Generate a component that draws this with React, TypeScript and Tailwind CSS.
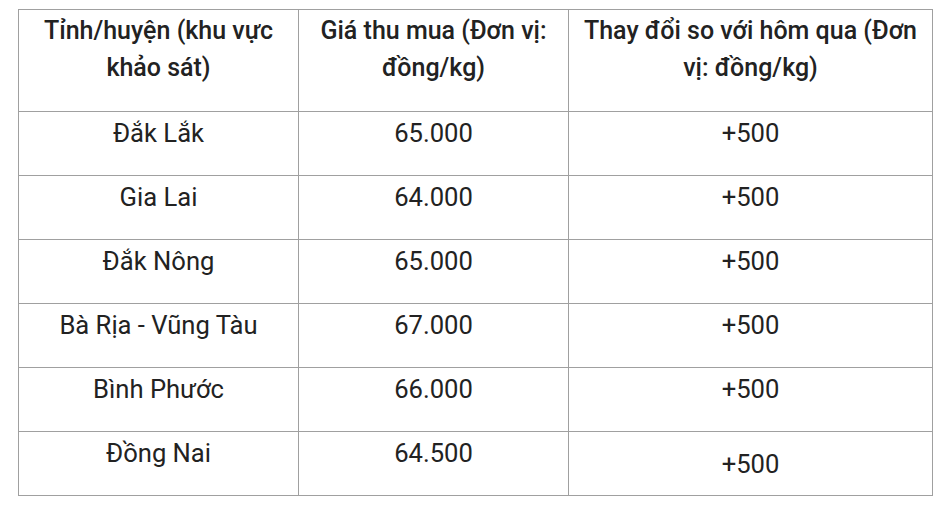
const rows = [
  ["Đắk Lắk", "65.000", "+500"],
  ["Gia Lai", "64.000", "+500"],
  ["Đắk Nông", "65.000", "+500"],
  ["Bà Rịa - Vũng Tàu", "67.000", "+500"],
  ["Bình Phước", "66.000", "+500"],
  ["Đồng Nai", "64.500", "+500"],
];

const cell = "border-r border-b border-[#a0a0a0] text-center px-2";

export default function App() {
  return (
    <div className="w-[952px] h-[508px] bg-white pt-[9px] pl-[18px] font-['Roboto',sans-serif] text-[#222]">
      <div className="grid grid-cols-[280px_270px_364px] border-l border-t border-[#a0a0a0] w-[915px]">
        <div className={`${cell} h-[102px] font-medium text-[25px] leading-[37px] pt-[2px]`}>
          Tỉnh/huyện (khu vực khảo sát)
        </div>
        <div className={`${cell} h-[102px] font-medium text-[25px] leading-[37px] pt-[2px]`}>
          Giá thu mua (Đơn vị: đồng/kg)
        </div>
        <div className={`${cell} h-[102px] font-medium text-[25px] leading-[37px] pt-[2px]`}>
          Thay đổi so với hôm qua (Đơn vị: đồng/kg)
        </div>
        {rows.map((r, i) => {
          const last = i === rows.length - 1;
          return [
            <div key={`${i}a`} className={`${cell} h-[64px] text-[25.6px] leading-[40px] pt-[1px]`}>
              {r[0]}
            </div>,
            <div key={`${i}b`} className={`${cell} h-[64px] text-[25.6px] leading-[40px] pt-[1px]`}>
              {r[1]}
            </div>,
            <div
              key={`${i}c`}
              className={`${cell} h-[64px] text-[25.6px] leading-[40px] ${last ? "flex items-center justify-center" : "pt-[1px]"}`}
            >
              {r[2]}
            </div>,
          ];
        })}
      </div>
    </div>
  );
}
